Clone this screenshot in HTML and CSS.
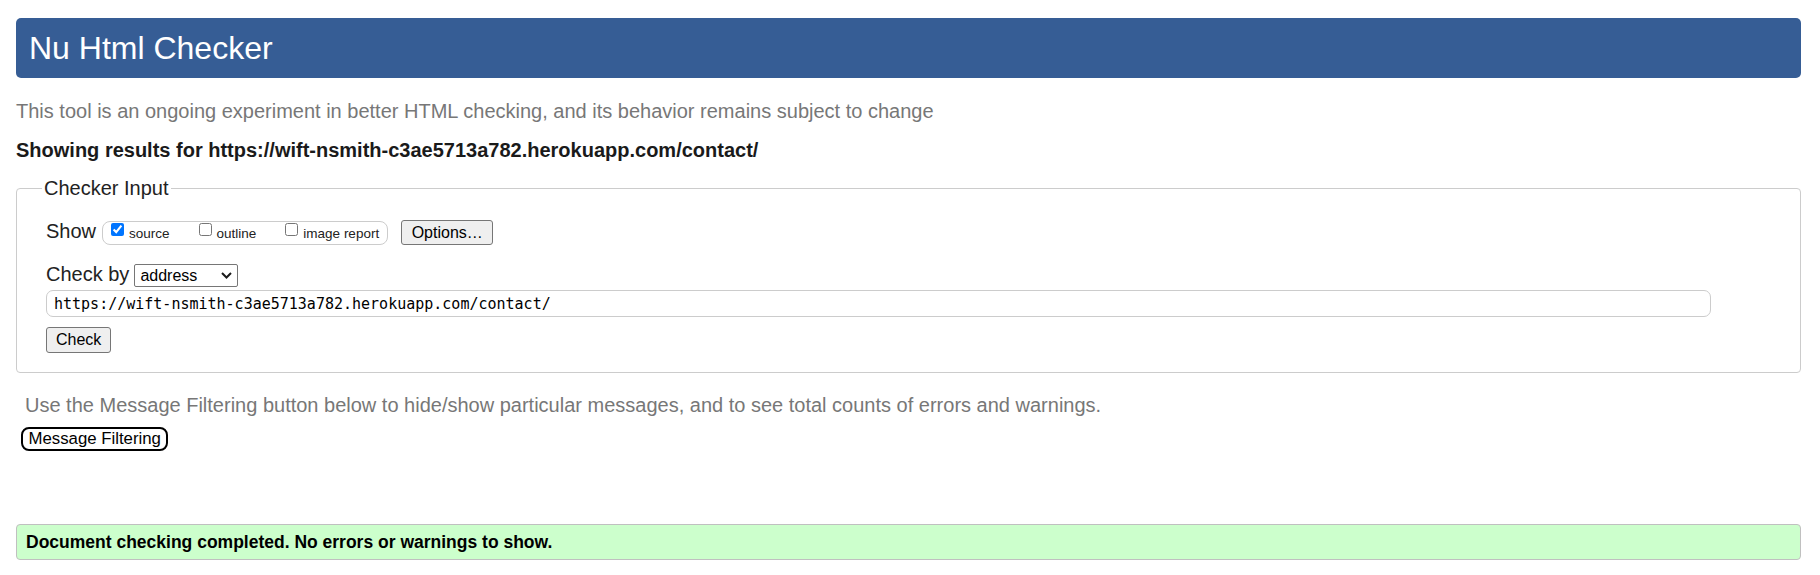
FILE: index.html
```html
<!DOCTYPE html>
<html lang="en">
<head>
<meta charset="utf-8">
<title>Nu Html Checker</title>
<link rel="stylesheet" href="styles.css">
</head>
<body>
<h1 class="title">Nu Html Checker</h1>
<p class="intro">This tool is an ongoing experiment in better HTML checking, and its behavior remains subject to change</p>
<p class="results">Showing results for https://wift-nsmith-c3ae5713a782.herokuapp.com/contact/</p>
<form class="checker">
  <fieldset class="checker-input">
    <legend class="checker-legend">Checker Input</legend>
    <div class="row row-show">
      <span class="label">Show</span>
      <div class="show-opts">
        <label class="opt"><input type="checkbox" class="cb" checked>source</label>
        <label class="opt"><input type="checkbox" class="cb">outline</label>
        <label class="opt"><input type="checkbox" class="cb">image report</label>
      </div>
      <button type="button" class="btn btn-options">Options…</button>
    </div>
    <div class="row row-by">
      <span class="label">Check by</span>
      <span class="select-wrap">
        <select class="select"><option>address</option></select>
        <svg class="chev" width="11" height="7" viewBox="0 0 11 7"><path d="M1 1 L5.5 5.5 L10 1" fill="none" stroke="#1a1a1a" stroke-width="2"/></svg>
      </span>
    </div>
    <div class="row row-url">
      <input type="text" class="url" value="https://wift-nsmith-c3ae5713a782.herokuapp.com/contact/">
    </div>
    <div class="row row-check">
      <button type="button" class="btn btn-check">Check</button>
    </div>
  </fieldset>
</form>
<p class="filter-note">Use the Message Filtering button below to hide/show particular messages, and to see total counts of errors and warnings.</p>
<button type="button" class="btn-filter">Message Filtering</button>
<div class="done">Document checking completed. No errors or warnings to show.</div>
</body>
</html>
```
FILE: styles.css
```css
* {
  box-sizing: border-box;
}

body {
  margin: 0;
  padding: 18px 19px 0 16px;
  font-family: "Liberation Sans", Arial, sans-serif;
  background: #fff;
  color: #111;
}

.title {
  margin: 0;
  height: 60px;
  line-height: 60px;
  padding-left: 13px;
  background: #365d95;
  color: #fff;
  font-size: 32px;
  font-weight: normal;
  border-radius: 5px;
}

.intro {
  margin: 22px 0 0;
  font-size: 20px;
  line-height: 22px;
  color: #777;
}

.results {
  margin: 17px 0 0;
  font-size: 20px;
  line-height: 22px;
  font-weight: bold;
  color: #1a1a1a;
}

.checker {
  margin: 15px 0 0;
}

.checker-input {
  margin: 0;
  min-width: 0;
  padding: 20px 19px 19px 29px;
  border: 1px solid #ccc;
  border-radius: 4px;
}

.checker-legend {
  margin-left: -4px;
  padding: 0 2px;
  font-size: 20px;
  line-height: 24px;
  color: #222;
}

.row {
  display: flex;
  align-items: flex-start;
}

.label {
  font-size: 20px;
  line-height: 22px;
  color: #222;
}

.row-show {
  height: 25px;
}

.show-opts {
  display: flex;
  gap: 25px;
  height: 24px;
  margin: 1px 0 0 6px;
  padding: 0 8px 0 4px;
  border: 1px solid #ccc;
  border-radius: 8px;
}

.opt {
  display: flex;
  align-items: center;
  font-size: 13.5px;
  color: #222;
}

.cb {
  align-self: flex-start;
  width: 13px;
  height: 13px;
  margin: 1px 5px 0 4px;
}

.btn {
  height: 25px;
  padding: 0 9px;
  font-family: "Liberation Sans", Arial, sans-serif;
  font-size: 16px;
  color: #000;
  background: #efefef;
  border: 1px solid #767676;
  border-radius: 3px;
}

.btn-options {
  margin-left: 13px;
  padding: 0 9.5px;
}

.row-by {
  margin-top: 18px;
}

.select-wrap {
  position: relative;
  margin: 1px 0 0 5px;
}

.select {
  display: block;
  appearance: none;
  -webkit-appearance: none;
  width: 104px;
  height: 23px;
  margin: 0;
  padding: 0 0 0 5px;
  font-family: "Liberation Sans", Arial, sans-serif;
  font-size: 16px;
  color: #000;
  background: #fff;
  border: 1px solid #767676;
  border-radius: 2px;
}

.chev {
  position: absolute;
  right: 6px;
  top: 8px;
  pointer-events: none;
}

.row-url {
  margin-top: 3px;
}

.url {
  width: 1665px;
  height: 27px;
  margin: 0;
  padding: 0 7px;
  font-family: "DejaVu Sans Mono", "Liberation Mono", monospace;
  font-size: 15px;
  color: #000;
  border: 1px solid #ccc;
  border-radius: 7px;
  outline: none;
}

.row-check {
  margin-top: 10px;
}

.btn-check {
  height: 26px;
}

.filter-note {
  margin: 20px 0 0 9px;
  font-size: 20px;
  line-height: 24px;
  color: #777;
}

.btn-filter {
  display: block;
  height: 24px;
  margin: 10px 0 0 5px;
  padding: 0 5.5px;
  font-family: "Liberation Sans", Arial, sans-serif;
  font-size: 16.8px;
  color: #000;
  background: #fff;
  border: 2px solid #000;
  border-radius: 8px;
}

.done {
  margin-top: 73px;
  padding: 5.5px 9px 6.5px;
  font-size: 17.5px;
  line-height: 22px;
  font-weight: bold;
  color: #000;
  background: #ccffcc;
  border: 1px solid #c0c0c0;
  border-radius: 4px;
}
```
